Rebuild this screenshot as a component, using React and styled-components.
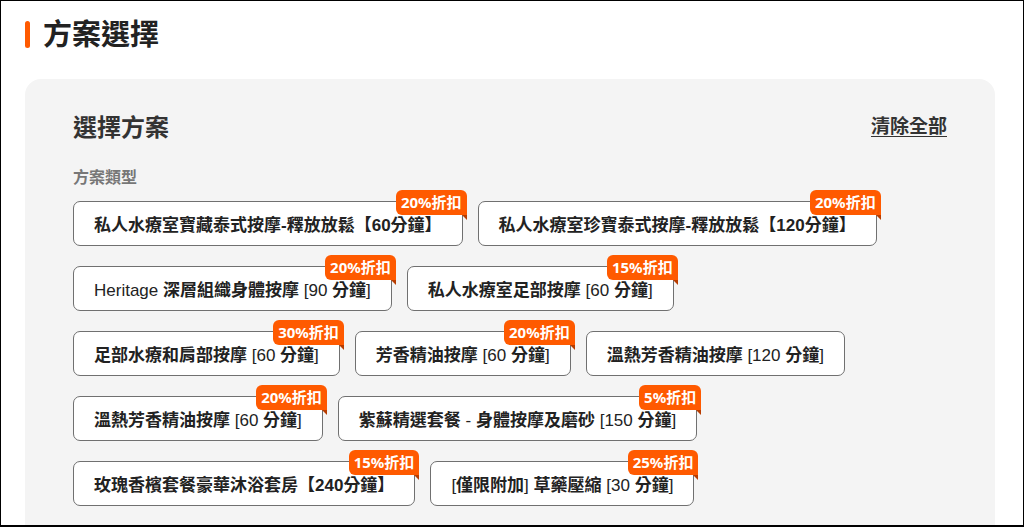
import React from "react";
import styled, { createGlobalStyle } from "styled-components";

const GlobalStyle = createGlobalStyle`
  * { box-sizing: border-box; }
  body {
    margin: 0;
    height: 100vh;
    overflow: hidden;
    border: 1px solid #000;
    border-bottom-width: 2px;
    background: #fff;
    font-family: "Noto Sans", "Noto Sans CJK TC", sans-serif;
    color: #222;
  }
`;

const Page = styled.main`
  padding: 17px 28px 0 24px;
`;

const PageTitle = styled.h1`
  display: flex;
  align-items: center;
  gap: 13px;
  margin: 0 0 29px;
  font-size: 29px;
  line-height: 32px;
  font-weight: 700;
  color: #222;

  &::before {
    content: "";
    width: 5px;
    height: 27px;
    border-radius: 3px;
    background: #ff5a00;
  }
`;

const Panel = styled.section`
  background: #f4f4f4;
  border-radius: 16px;
  padding: 30px 48px 40px;
`;

const PanelHead = styled.div`
  display: flex;
  align-items: center;
  justify-content: space-between;
  height: 32px;
`;

const PanelTitle = styled.h2`
  margin: 0;
  font-size: 24px;
  font-weight: 700;
  color: #333;
`;

const ClearAll = styled.button`
  border: 0;
  padding: 0;
  background: none;
  font: inherit;
  font-size: 19px;
  font-weight: 700;
  color: #333;
  text-decoration: underline;
  text-underline-offset: 3px;
  cursor: pointer;
`;

const GroupLabel = styled.h3`
  margin: 24px 0 12px;
  font-size: 16px;
  line-height: 24px;
  font-weight: 700;
  color: #777;
`;

const ChipList = styled.div`
  display: flex;
  flex-wrap: wrap;
  gap: 20px 15px;
`;

const Chip = styled.button`
  position: relative;
  height: 45px;
  padding: 0 20px;
  border: 1px solid #707070;
  border-radius: 7px;
  background: #fff;
  font-family: "Liberation Sans", "Noto Sans CJK TC", sans-serif;
  font-size: 17px;
  font-weight: 700;
  color: #222;
  white-space: nowrap;
  cursor: pointer;
`;

// ascii runs (brackets, numbers, latin words) render lighter than the CJK
const Latin = styled.span`
  font-weight: ${({ $bold }) => ($bold ? 700 : 400)};
`;

const Badge = styled.span`
  position: absolute;
  top: -12px;
  right: -5px;
  height: 25px;
  padding: 0 5px;
  border-radius: 6px 6px 0 6px;
  background: #ff5a00;
  color: #fff;
  font-family: "Noto Sans", "Noto Sans CJK TC", sans-serif;
  font-size: 15px;
  line-height: 25px;
  font-weight: 700;

  &::after {
    content: "";
    position: absolute;
    right: 0;
    top: 100%;
    width: 0;
    height: 0;
    border-top: 5px solid #b83c00;
    border-left: 5px solid transparent;
  }
`;

const plans = [
  { name: "私人水療室寶藏泰式按摩-釋放放鬆【60分鐘】", off: 20, boldLatin: true },
  { name: "私人水療室珍寶泰式按摩-釋放放鬆【120分鐘】", off: 20, boldLatin: true },
  { name: "Heritage 深層組織身體按摩 [90 分鐘]", off: 20 },
  { name: "私人水療室足部按摩 [60 分鐘]", off: 15 },
  { name: "足部水療和肩部按摩 [60 分鐘]", off: 30 },
  { name: "芳香精油按摩 [60 分鐘]", off: 20 },
  { name: "溫熱芳香精油按摩 [120 分鐘]" },
  { name: "溫熱芳香精油按摩 [60 分鐘]", off: 20 },
  { name: "紫蘇精選套餐 - 身體按摩及磨砂 [150 分鐘]", off: 5 },
  { name: "玫瑰香檳套餐豪華沐浴套房【240分鐘】", off: 15, boldLatin: true },
  { name: "[僅限附加] 草藥壓縮 [30 分鐘]", off: 25 },
];

const PlanName = ({ text, boldLatin }) =>
  text.split(/([\x20-\x7e]+)/).map((part, i) =>
    /^[\x20-\x7e]+$/.test(part) ? (
      <Latin key={i} $bold={boldLatin}>
        {part}
      </Latin>
    ) : (
      part
    )
  );

export default function App() {
  return (
    <>
      <GlobalStyle />
      <Page>
        <PageTitle>方案選擇</PageTitle>
        <Panel>
          <PanelHead>
            <PanelTitle>選擇方案</PanelTitle>
            <ClearAll>清除全部</ClearAll>
          </PanelHead>
          <GroupLabel>方案類型</GroupLabel>
          <ChipList>
            {plans.map((p) => (
              <Chip key={p.name}>
                <PlanName text={p.name} boldLatin={p.boldLatin} />
                {p.off && <Badge>{p.off}%折扣</Badge>}
              </Chip>
            ))}
          </ChipList>
        </Panel>
      </Page>
    </>
  );
}
